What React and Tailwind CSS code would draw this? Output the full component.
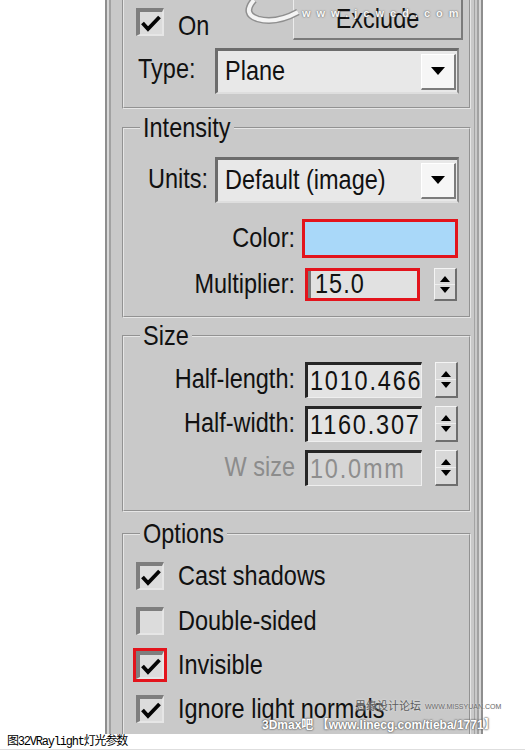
import React from "react";

const FONT = "font-['Liberation_Sans',Arial,sans-serif]";

function T({ children, className = "" }) {
  return <span className={`inline-block scale-y-[1.17] leading-[28px] whitespace-nowrap ${className}`}>{children}</span>;
}

function Tick() {
  return (
    <svg width="22" height="22" viewBox="0 0 22 22">
      <path d="M2.5 11 L8 17 L19.5 5" stroke="#050505" strokeWidth="3.8" fill="none" strokeLinejoin="miter" />
    </svg>
  );
}

function CheckBox({ checked, red }) {
  return (
    <div
      className={`w-[28px] h-[28px] shrink-0 border-t-4 border-l-4 border-t-[#7e7e7e] border-l-[#7e7e7e] border-r-2 border-b-2 border-r-[#e6e6e6] border-b-[#e6e6e6] bg-[#dcdcdc] flex items-center justify-center ${
        red ? "outline-3 outline-[#e3141c]" : ""
      }`}
    >
      {checked && <Tick />}
    </div>
  );
}

function Dropdown({ value }) {
  return (
    <div className="w-[244px] h-[46px] shrink-0 flex items-center bg-[#e8e8e8] border-t-[3px] border-l-[3px] border-t-[#6c6c6c] border-l-[#6c6c6c] border-r-2 border-b-2 border-r-[#8a8a8a] border-b-[#dedede]">
      <div className="flex-1 pl-[7px]">
        <T>{value}</T>
      </div>
      <div className="w-[35px] h-[36px] mr-[1px] flex items-center justify-center bg-[#f6f6f6] border-t border-l border-t-white border-l-white border-r-2 border-b-2 border-r-[#7c7c7c] border-b-[#7c7c7c]">
        <svg width="14" height="8" viewBox="0 0 14 8">
          <path d="M0 0 L14 0 L7 8 Z" fill="#000" />
        </svg>
      </div>
    </div>
  );
}

function Spinner() {
  return (
    <div className="w-[23px] h-full shrink-0 flex flex-col bg-[#d8d8d8] border-t border-l border-t-[#f4f4f4] border-l-[#f4f4f4] border-r-2 border-b-2 border-r-[#6e6e6e] border-b-[#6e6e6e]">
      <div className="flex-1 flex items-end justify-center pb-[2px] border-b border-[#eeeeee]">
        <svg width="10" height="6" viewBox="0 0 10 6">
          <path d="M5 0 L10 6 L0 6 Z" fill="#000" />
        </svg>
      </div>
      <div className="flex-1 flex items-start justify-center pt-[2px]">
        <svg width="10" height="6" viewBox="0 0 10 6">
          <path d="M0 0 L10 0 L5 6 Z" fill="#000" />
        </svg>
      </div>
    </div>
  );
}

function NumInput({ value, disabled }) {
  return (
    <div
      className={`w-[117px] h-full shrink-0 overflow-hidden whitespace-nowrap flex items-center pl-[2px] border-t-[3px] border-l-[3px] border-t-[#262626] border-l-[#262626] border-r border-b border-r-[#efefef] border-b-[#efefef] ${
        disabled ? "bg-[#d6d6d6] text-[#8e8e8e]" : "bg-[#e3e3e3]"
      }`}
    >
      <T className="tracking-[1.8px]">{value}</T>
    </div>
  );
}

function SizeRow({ label, value, disabled, mt }) {
  return (
    <div className={`${mt} h-[36px] flex items-center`}>
      <div className={`w-[171px] text-right ${disabled ? "text-[#8c8c8c]" : ""}`}>
        <T>{label}</T>
      </div>
      <div className="ml-[10px] h-full flex">
        <NumInput value={value} disabled={disabled} />
      </div>
      <div className="ml-[13px] h-full flex">
        <Spinner />
      </div>
    </div>
  );
}

function OptRow({ label, checked, red, mt }) {
  return (
    <div className={`${mt} h-[28px] flex items-center`}>
      <div className="ml-[12px]">
        <CheckBox checked={checked} red={red} />
      </div>
      <div className="ml-[14px] pt-[2px]">
        <T>{label}</T>
      </div>
    </div>
  );
}

function Legend({ children }) {
  return (
    <legend className="ml-[16px] px-[3px] h-[30px] leading-[30px]">
      <span className="inline-block scale-y-[1.17] leading-[30px]">{children}</span>
    </legend>
  );
}

export default function App() {
  return (
    <div className={`relative w-[525px] h-[750px] bg-white overflow-hidden ${FONT} text-[23.5px] text-[#111111]`}>
      <div className="ml-[105px] w-[378px] h-[734px] border-x-2 border-[#8e8e8e]">
        <div className="h-full border-x-2 border-[#d7d7d7]">
          <div className="h-full border-x-2 border-[#a2a2a2] bg-[#c9c9c9] pl-[11px] pr-[2px] overflow-hidden">
            <div className="h-full border-r border-[#a3a3a3] pr-[3px] flex flex-col">
              {/* Top group (continues above) */}
              <div className="h-[109px] shrink-0 [border-width:0_2px_2px_2px] [border-style:groove] border-[#e6e6e6] flex flex-col">
                <div className="h-[40px] flex items-start">
                  <div className="ml-[12px] mt-[8px]">
                    <CheckBox checked />
                  </div>
                  <div className="ml-[14px] mt-[9px]">
                    <T>On</T>
                  </div>
                  <div className="ml-auto mr-[6px] w-[170px] h-[40px] flex items-end justify-center pb-[5px] bg-[#cbcbcb] border-l border-l-[#ececec] border-r-2 border-b-2 border-r-[#7a7a7a] border-b-[#7a7a7a]">
                    <T>Exclude</T>
                  </div>
                </div>
                <div className="mt-[8px] h-[46px] flex items-center">
                  <div className="ml-[14px] w-[77px] pb-[3px]">
                    <T>Type:</T>
                  </div>
                  <Dropdown value="Plane" />
                </div>
              </div>

              {/* Intensity */}
              <fieldset className="mt-[4px] shrink-0 [border-width:2px] [border-style:groove] border-[#e6e6e6] pb-[15px]">
                <Legend>Intensity</Legend>
                <div className="mt-[14px] h-[46px] flex items-center">
                  <div className="w-[84px] text-right">
                    <T>Units:</T>
                  </div>
                  <div className="ml-[7px]">
                    <Dropdown value="Default (image)" />
                  </div>
                </div>
                <div className="mt-[16px] h-[39px] flex items-center">
                  <div className="w-[171px] text-right">
                    <T>Color:</T>
                  </div>
                  <div className="ml-[7px] w-[156px] h-[39px] border-[3px] border-[#e3141c] bg-[#a9d8f9]" />
                </div>
                <div className="mt-[10px] h-[33px] flex items-center">
                  <div className="w-[171px] text-right">
                    <T>Multiplier:</T>
                  </div>
                  <div className="ml-[10px] w-[115px] h-[33px] border-[3px] border-[#e3141c] bg-[#e1e1e1] flex items-center">
                    <div className="w-[3px] h-full bg-[#7a7a7a]" />
                    <div className="pl-[4px]">
                      <T className="tracking-[1px]">15.0</T>
                    </div>
                  </div>
                  <div className="ml-[14px] h-[33px] flex">
                    <Spinner />
                  </div>
                </div>
              </fieldset>

              {/* Size */}
              <fieldset className="mt-[3px] shrink-0 [border-width:2px] [border-style:groove] border-[#e6e6e6] pb-[24px]">
                <Legend>Size</Legend>
                <SizeRow mt="mt-[11px]" label="Half-length:" value="1010.466mm" />
                <SizeRow mt="mt-[8px]" label="Half-width:" value="1160.307mm" />
                <SizeRow mt="mt-[8px]" label="W size" value="10.0mm" disabled />
              </fieldset>

              {/* Options */}
              <fieldset className="mt-[7px] shrink-0 h-[260px] [border-width:2px] [border-style:groove] border-[#e6e6e6]">
                <Legend>Options</Legend>
                <OptRow mt="mt-[13px]" label="Cast shadows" checked />
                <OptRow mt="mt-[17px]" label="Double-sided" />
                <OptRow mt="mt-[16px]" label="Invisible" checked red />
                <OptRow mt="mt-[16px]" label="Ignore light normals" checked />
              </fieldset>
            </div>
          </div>
        </div>
      </div>

      {/* caption */}
      <div className="h-[16px] pl-[7px] pt-[1px] border-b border-[#dedede] text-[12px] leading-[14px] tracking-[-1.2px] text-black font-['Liberation_Mono','Noto_Sans_CJK_SC',monospace]">
        图32VRaylight灯光参数
      </div>

      {/* watermarks */}
      <svg className="absolute left-[236px] top-0" width="80" height="26" viewBox="0 0 80 26">
        <path d="M18 0 Q6 14 22 19 Q40 24 62 12" stroke="#8f8f8f" strokeWidth="7" fill="none" />
        <path d="M18 0 Q6 14 22 19 Q40 24 62 12" stroke="#f4f4f4" strokeWidth="4" fill="none" />
      </svg>
      <div className="absolute left-[302px] top-[6px] text-[11px] leading-[14px] font-bold tracking-[6px] text-[#f8f8f8] font-['Liberation_Sans',Arial,sans-serif] [text-shadow:0_0_1px_#777,0_0_2px_#777]">
        www.jcwcd.com
      </div>
      <div className="absolute left-[355px] top-[699px] flex items-end gap-[4px]">
        <span className="text-[11px] leading-[13px] text-[#5c5c5c] font-['Noto_Sans_CJK_SC',sans-serif] [text-shadow:0_0_2px_#eeeeee]">
          思缘设计论坛
        </span>
        <span className="text-[7px] leading-[10px] text-[#6a6a6a] font-['Liberation_Sans',Arial,sans-serif] [text-shadow:0_0_2px_#eeeeee]">
          WWW.MISSYUAN.COM
        </span>
      </div>
      <div className="absolute left-[262px] top-[717px] text-[12px] leading-[16px] font-bold text-white whitespace-nowrap font-['Liberation_Sans','Noto_Sans_CJK_SC',sans-serif] [text-shadow:0_0_1px_#6a6a6a,0_0_2px_#6a6a6a,0_0_2px_#6a6a6a]">
        3Dmax吧 【www.linecg.com/tieba/1771】
      </div>
    </div>
  );
}
